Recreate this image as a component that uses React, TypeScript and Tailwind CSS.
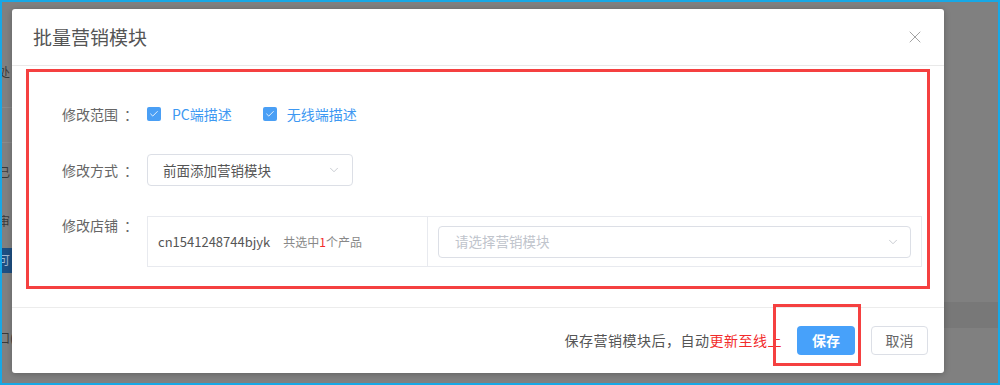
import React from "react";
import { ChevronDown, X, Check } from "lucide-react";

const font = { fontFamily: '"Microsoft YaHei", "Noto Sans CJK SC", "Noto Sans", sans-serif' };

function Checkbox() {
  return (
    <span className="flex h-[14px] w-[14px] items-center justify-center rounded-[2px] bg-[#4a9ff5]">
      <Check size={10} strokeWidth={2} color="#ffffff" />
    </span>
  );
}

function Label({ text, className = "" }: { text: string; className?: string }) {
  return (
    <span className={"flex w-[85px] text-[14px] text-[#666666] " + className}>
      {text}
      <span className="ml-[6px]">：</span>
    </span>
  );
}

export default function App() {
  return (
    <div
      className="relative flex h-[385px] w-[1000px] overflow-hidden border-2 border-[#17a8e6] bg-[#808080]"
      style={font}
    >
      {/* background page peeking out on the left */}
      <div className="flex w-[10px] flex-col overflow-hidden text-[12px] leading-[16px] text-[#3a3a3a]">
        <div className="mt-[62px] h-[16px] -ml-[4px]">处</div>
        <div className="mt-[27px] h-px bg-[#8a8a8a]" />
        <div className="mt-[34px] h-px bg-[#8a8a8a]" />
        <div className="mt-[21px] h-[16px] -ml-[4px]">已</div>
        <div className="mt-[33px] h-[16px] -ml-[4px]">审</div>
        <div className="mt-[19px] h-[25px] bg-[#1e4f82] pt-[4px] text-[#9fb6cf]">
          <span className="-ml-[4px]">可</span>
        </div>
        <div className="mt-[57px] h-[16px] -ml-[4px] whitespace-nowrap">口(</div>
      </div>
      <div className="flex-1" />
      <div className="flex w-[54px] flex-col">
        <div className="mt-[300px] h-[26px] bg-[#787878]" />
      </div>

      {/* modal */}
      <div className="absolute left-[10px] top-[7px] flex h-[364px] w-[932px] flex-col rounded-[3px] bg-white shadow-[0_1px_6px_rgba(0,0,0,0.25)]">
        <div className="flex h-[57px] shrink-0 items-center justify-between border-b border-[#e9e9e9] pl-[21px] pr-[19px]">
          <span className="text-[19px] text-[#555555]">批量营销模块</span>
          <X size={20} strokeWidth={1.1} color="#9a9a9a" />
        </div>

        <div className="mx-[14px] mt-[3px] h-[220px] border-[3px] border-[#f54040] pl-[33px] pt-[26px]">
          <div className="flex h-[32px] items-center">
            <Label text="修改范围" />
            <Checkbox />
            <span className="ml-[11px] text-[14px] text-[#3d98f2]">PC端描述</span>
            <span className="ml-[31px]">
              <Checkbox />
            </span>
            <span className="ml-[10px] text-[14px] text-[#3d98f2]">无线端描述</span>
          </div>

          <div className="mt-[24px] flex h-[32px] items-center">
            <Label text="修改方式" />
            <div className="flex h-[32px] w-[206px] items-center justify-between rounded-[4px] border border-[#dcdfe6] pl-[15px] pr-[11px]">
              <span className="text-[13.5px] text-[#555555]">前面添加营销模块</span>
              <ChevronDown size={14} strokeWidth={1.3} color="#b8bcc4" />
            </div>
          </div>

          <div className="mt-[30px] flex items-start">
            <Label text="修改店铺" className="mt-[1px] leading-[16px]" />
            <div className="flex h-[51px] w-[775px] border border-[#e8eaef]">
              <div className="flex w-[280px] items-center border-r border-[#e8eaef] pl-[10px]">
                <span className="text-[13px] text-[#555555]">cn1541248744bjyk</span>
                <span className="ml-[13px] text-[12px] text-[#888888]">
                  共选中<span className="text-[#f22b2b]">1</span>个产品
                </span>
              </div>
              <div className="flex flex-1 items-center px-[10px]">
                <div className="flex h-[32px] w-full items-center justify-between rounded-[4px] border border-[#dcdfe6] pl-[16px] pr-[10px]">
                  <span className="text-[13.5px] text-[#c0c4cc]">请选择营销模块</span>
                  <ChevronDown size={14} strokeWidth={1.3} color="#b8bcc4" />
                </div>
              </div>
            </div>
          </div>
        </div>

        <div className="mt-[18px] flex flex-1 items-center justify-end border-t border-[#ececec] pr-[16px]">
          <span className="text-[14px] tracking-[0.5px] text-[#555555]">
            保存营销模块后，自动<span className="text-[#f22b2b]">更新至线上</span>
          </span>
          <button className="ml-[15px] flex h-[29px] w-[58px] items-center justify-center rounded-[4px] bg-[#47a1fa] text-[14px] font-bold text-white">
            保存
          </button>
          <button className="ml-[16px] flex h-[29px] w-[57px] items-center justify-center rounded-[4px] border border-[#dcdfe6] text-[14px] text-[#666666]">
            取消
          </button>
        </div>

        {/* highlight around save */}
        <div className="absolute left-[761px] top-[295px] h-[62px] w-[88px] border-[3px] border-[#f54040]" />
      </div>
    </div>
  );
}
